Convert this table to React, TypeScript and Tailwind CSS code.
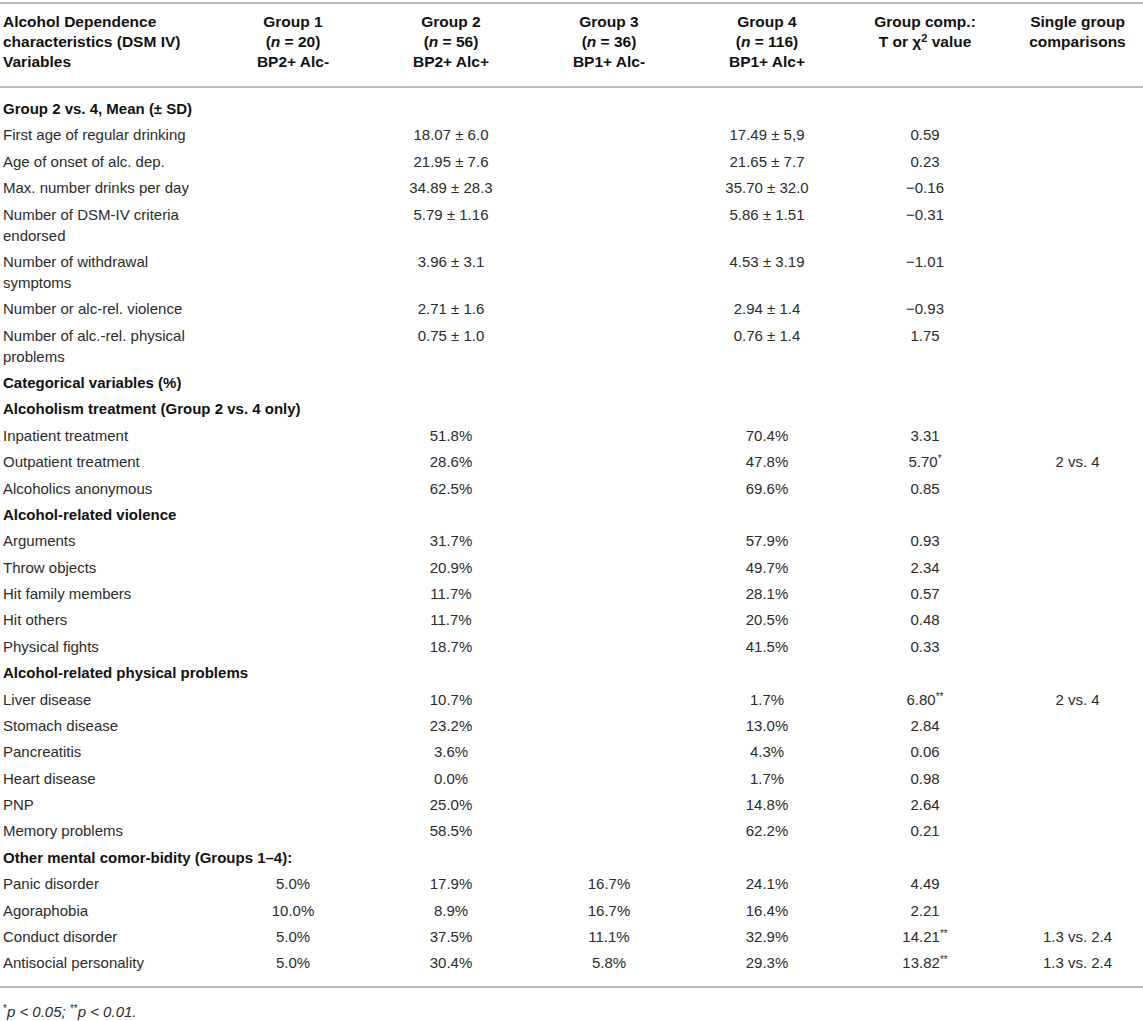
import React from 'react';

type Row =
  | { kind: 'section'; label: string; first?: boolean }
  | { kind: 'data'; label: string; g1?: string; g2?: string; g3?: string; g4?: string; t?: string; star?: string; single?: string; last?: boolean };

const rows: Row[] = [
  { kind: 'section', label: 'Group 2 vs. 4, Mean (± SD)', first: true },
  { kind: 'data', label: 'First age of regular drinking', g2: '18.07 ± 6.0', g4: '17.49 ± 5,9', t: '0.59' },
  { kind: 'data', label: 'Age of onset of alc. dep.', g2: '21.95 ± 7.6', g4: '21.65 ± 7.7', t: '0.23' },
  { kind: 'data', label: 'Max. number drinks per day', g2: '34.89 ± 28.3', g4: '35.70 ± 32.0', t: '−0.16' },
  { kind: 'data', label: 'Number of DSM-IV criteria endorsed', g2: '5.79 ± 1.16', g4: '5.86 ± 1.51', t: '−0.31' },
  { kind: 'data', label: 'Number of withdrawal symptoms', g2: '3.96 ± 3.1', g4: '4.53 ± 3.19', t: '−1.01' },
  { kind: 'data', label: 'Number or alc-rel. violence', g2: '2.71 ± 1.6', g4: '2.94 ± 1.4', t: '−0.93' },
  { kind: 'data', label: 'Number of alc.-rel. physical problems', g2: '0.75 ± 1.0', g4: '0.76 ± 1.4', t: '1.75' },
  { kind: 'section', label: 'Categorical variables (%)' },
  { kind: 'section', label: 'Alcoholism treatment (Group 2 vs. 4 only)' },
  { kind: 'data', label: 'Inpatient treatment', g2: '51.8%', g4: '70.4%', t: '3.31' },
  { kind: 'data', label: 'Outpatient treatment', g2: '28.6%', g4: '47.8%', t: '5.70', star: '*', single: '2 vs. 4' },
  { kind: 'data', label: 'Alcoholics anonymous', g2: '62.5%', g4: '69.6%', t: '0.85' },
  { kind: 'section', label: 'Alcohol-related violence' },
  { kind: 'data', label: 'Arguments', g2: '31.7%', g4: '57.9%', t: '0.93' },
  { kind: 'data', label: 'Throw objects', g2: '20.9%', g4: '49.7%', t: '2.34' },
  { kind: 'data', label: 'Hit family members', g2: '11.7%', g4: '28.1%', t: '0.57' },
  { kind: 'data', label: 'Hit others', g2: '11.7%', g4: '20.5%', t: '0.48' },
  { kind: 'data', label: 'Physical fights', g2: '18.7%', g4: '41.5%', t: '0.33' },
  { kind: 'section', label: 'Alcohol-related physical problems' },
  { kind: 'data', label: 'Liver disease', g2: '10.7%', g4: '1.7%', t: '6.80', star: '**', single: '2 vs. 4' },
  { kind: 'data', label: 'Stomach disease', g2: '23.2%', g4: '13.0%', t: '2.84' },
  { kind: 'data', label: 'Pancreatitis', g2: '3.6%', g4: '4.3%', t: '0.06' },
  { kind: 'data', label: 'Heart disease', g2: '0.0%', g4: '1.7%', t: '0.98' },
  { kind: 'data', label: 'PNP', g2: '25.0%', g4: '14.8%', t: '2.64' },
  { kind: 'data', label: 'Memory problems', g2: '58.5%', g4: '62.2%', t: '0.21' },
  { kind: 'section', label: 'Other mental comor-bidity (Groups 1–4):' },
  { kind: 'data', label: 'Panic disorder', g1: '5.0%', g2: '17.9%', g3: '16.7%', g4: '24.1%', t: '4.49' },
  { kind: 'data', label: 'Agoraphobia', g1: '10.0%', g2: '8.9%', g3: '16.7%', g4: '16.4%', t: '2.21' },
  { kind: 'data', label: 'Conduct disorder', g1: '5.0%', g2: '37.5%', g3: '11.1%', g4: '32.9%', t: '14.21', star: '**', single: '1.3 vs. 2.4' },
  { kind: 'data', label: 'Antisocial personality', g1: '5.0%', g2: '30.4%', g3: '5.8%', g4: '29.3%', t: '13.82', star: '**', single: '1.3 vs. 2.4', last: true },
];

const groups = [
  { name: 'Group 1', n: '20', tag: 'BP2+ Alc-' },
  { name: 'Group 2', n: '56', tag: 'BP2+ Alc+' },
  { name: 'Group 3', n: '36', tag: 'BP1+ Alc-' },
  { name: 'Group 4', n: '116', tag: 'BP1+ Alc+' },
];

const App: React.FC = () => {
  return (
    <div className="w-[1143px] bg-white pt-[2px] text-[15px] text-[#2b2b2b] font-['Liberation_Sans',Arial,sans-serif]">
      <table className="w-full table-fixed border-collapse">
        <colgroup>
          <col className="w-[214px]" />
          <col className="w-[158px]" />
          <col className="w-[158px]" />
          <col className="w-[158px]" />
          <col className="w-[158px]" />
          <col className="w-[158px]" />
          <col className="w-[139px]" />
        </colgroup>
        <thead>
          <tr className="border-y-2 border-[#bdbdbd] align-top text-[15.5px] leading-[20px] font-bold text-[#111]">
            <th className="pl-[3px] pr-2 pt-[8px] pb-[14px] text-left font-bold">
              Alcohol Dependence characteristics (DSM IV) Variables
            </th>
            {groups.map((g) => (
              <th key={g.name} className="pt-[8px] pb-[14px] text-center font-bold">
                <div>{g.name}</div>
                <div>
                  (<span className="italic">n</span> = {g.n})
                </div>
                <div>{g.tag}</div>
              </th>
            ))}
            <th className="pt-[8px] pb-[14px] text-center font-bold">
              <div>Group comp.:</div>
              <div>
                T or χ<sup className="text-[11px]">2</sup> value
              </div>
            </th>
            <th className="pl-2 pt-[8px] pb-[14px] text-center font-bold">
              <div>Single group</div>
              <div>comparisons</div>
            </th>
          </tr>
        </thead>
        <tbody className="border-b-2 border-[#bdbdbd] leading-[21px]">
          {rows.map((r, i) => {
            if (r.kind === 'section') {
              return (
                <tr key={i}>
                  <td
                    colSpan={7}
                    className={`pl-[3px] py-[2.7px] font-bold text-[#111] ${r.first ? 'pt-[10px]' : ''}`}
                  >
                    {r.label}
                  </td>
                </tr>
              );
            }
            const pad = r.last ? 'pt-[2.7px] pb-[13px]' : 'py-[2.7px]';
            return (
              <tr key={i} className="align-top">
                <td className={`pl-[3px] pr-4 ${pad}`}>{r.label}</td>
                <td className={`text-center ${pad}`}>{r.g1}</td>
                <td className={`text-center ${pad}`}>{r.g2}</td>
                <td className={`text-center ${pad}`}>{r.g3}</td>
                <td className={`text-center ${pad}`}>{r.g4}</td>
                <td className={`text-center ${pad}`}>
                  {r.t}
                  {r.star && <sup className="text-[10px] leading-none">{r.star}</sup>}
                </td>
                <td className={`pl-2 text-center ${pad}`}>{r.single}</td>
              </tr>
            );
          })}
        </tbody>
      </table>
      <p className="pl-[3px] pt-[15px] text-[15px] italic leading-[18px]">
        <sup className="not-italic text-[10px] leading-none">*</sup>p &lt; 0.05;{' '}
        <sup className="not-italic text-[10px] leading-none">**</sup>p &lt; 0.01.
      </p>
    </div>
  );
};

export default App;
